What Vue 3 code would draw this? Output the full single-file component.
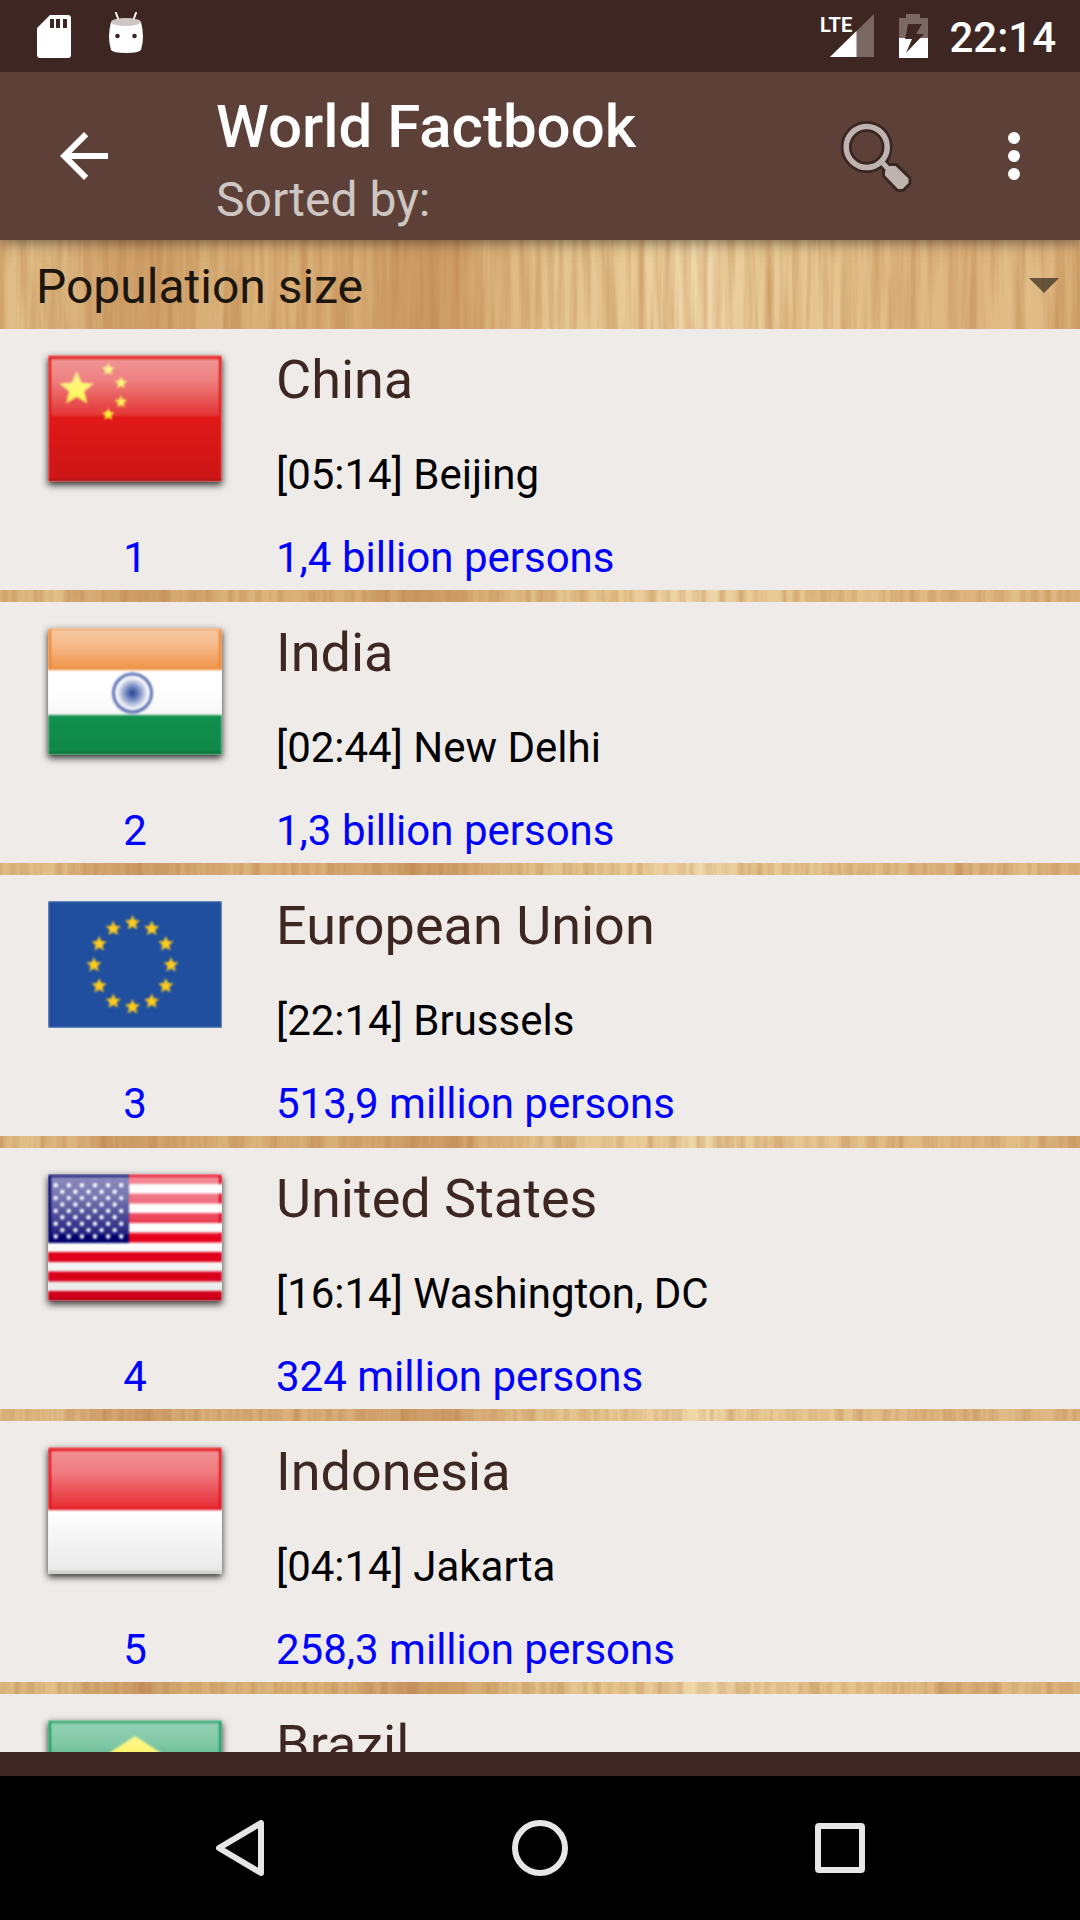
<script setup>
import { ref } from 'vue'

const sortKey = ref('population')

const countries = [
  { code: 'cn', name: 'China', capital: '[05:14] Beijing', rank: 1, value: '1,4 billion persons' },
  { code: 'in', name: 'India', capital: '[02:44] New Delhi', rank: 2, value: '1,3 billion persons' },
  { code: 'eu', name: 'European Union', capital: '[22:14] Brussels', rank: 3, value: '513,9 million persons' },
  { code: 'us', name: 'United States', capital: '[16:14] Washington, DC', rank: 4, value: '324 million persons' },
  { code: 'id', name: 'Indonesia', capital: '[04:14] Jakarta', rank: 5, value: '258,3 million persons' },
  { code: 'br', name: 'Brazil' },
]

// Five-pointed star as a polygon points list
function star(cx, cy, r) {
  const pts = []
  for (let i = 0; i < 10; i++) {
    const radius = i % 2 ? r * 0.45 : r
    const a = (Math.PI / 5) * i - Math.PI / 2
    pts.push(`${(cx + radius * Math.cos(a)).toFixed(1)},${(cy + radius * Math.sin(a)).toFixed(1)}`)
  }
  return pts.join(' ')
}

const chinaStars = [
  star(28.7, 34, 18), star(60.3, 14.5, 6.5), star(73, 28, 6.5), star(73, 47, 6.5), star(60.3, 59.5, 6.5),
]

const euStars = Array.from({ length: 12 }, (_, i) => {
  const a = (Math.PI / 6) * i
  return star(84.5 + 38.5 * Math.sin(a), 64 - 42 * Math.cos(a), 8)
})

const usStars = []
for (let row = 0; row < 9; row++) {
  const count = row % 2 ? 5 : 6
  for (let col = 0; col < count; col++) {
    usStars.push({ x: 7.7 + col * 13.1 + (row % 2 ? 6.6 : 0), y: 11.3 + row * 6.4 })
  }
}
</script>

<template>
  <div class="screen">
    <svg class="defs" aria-hidden="true">
      <defs>
        <linearGradient id="gloss" x1="0" y1="0" x2="0" y2="1">
          <stop offset="0" stop-color="#fff" stop-opacity=".54" />
          <stop offset=".35" stop-color="#fff" stop-opacity=".46" />
          <stop offset="1" stop-color="#fff" stop-opacity=".12" />
        </linearGradient>
        <linearGradient id="shade" x1="0" y1="0" x2="0" y2="1">
          <stop offset="0" stop-color="#000" stop-opacity="0" />
          <stop offset="1" stop-color="#000" stop-opacity=".09" />
        </linearGradient>
        <radialGradient id="chakra">
          <stop offset="0" stop-color="#1f3f96" />
          <stop offset=".45" stop-color="#7d90c6" />
          <stop offset="1" stop-color="#fff" />
        </radialGradient>
      </defs>
    </svg>

    <div class="status">
      <svg width="34" height="43" viewBox="0 0 34 43" fill="#fff">
        <path fill-rule="evenodd" d="M13 0H31Q34 0 34 3V40Q34 43 31 43H3Q0 43 0 40V13ZM13 4V13H17V4ZM19 4V13H23V4ZM26 4V13H30V4Z" />
      </svg>
      <svg class="bot" width="34" height="42" viewBox="0 0 34 42">
        <path d="M7 1L10 9M27 1L24 9" stroke="#fff" stroke-width="2" stroke-linecap="round" />
        <path d="M2 10Q17 16 32 10Q36 25 32 38Q30 41 17 41Q4 41 2 38Q-2 25 2 10Z" fill="#fff" />
        <ellipse cx="17" cy="10" rx="15" ry="4" fill="#cfc6c4" />
        <circle cx="8.500" cy="24" r="2.300" fill="#3e2723" />
        <circle cx="25.500" cy="24" r="2.300" fill="#3e2723" />
      </svg>
      <span class="spacer"></span>
      <svg width="54" height="44" viewBox="0 0 54 44">
        <path d="M54 0V43H10Z" fill="#7b6865" />
        <path d="M36.500 17V43H10Z" fill="#fff" />
        <text class="lte" x="0" y="18">LTE</text>
      </svg>
      <svg class="battery" width="29" height="44" viewBox="0 0 29 44">
        <path d="M7 0H21V4H29V24H0V4H7Z" fill="#7b6865" />
        <path d="M0 24H29V44H0Z" fill="#fff" />
        <path d="M9 10H23L17 20H25L7 39L13 25H6Z" fill="#3e2723" />
      </svg>
      <span class="clock">22:14</span>
    </div>

    <header class="bar">
      <button class="icon" aria-label="Back">
        <svg width="72" height="72" viewBox="0 0 24 24" fill="#fff">
          <path d="M20 11H7.830l5.590-5.590L12 4l-8 8 8 8 1.410-1.410L7.830 13H20v-2z" />
        </svg>
      </button>
      <div class="titles">
        <h1>World Factbook</h1>
        <label for="sort">Sorted by:</label>
      </div>
      <button class="icon" aria-label="Search">
        <svg width="72" height="72" viewBox="0 0 72 72" stroke-linejoin="round">
          <g fill="none" stroke="#3a2722">
            <circle cx="26.700" cy="27" r="20.500" stroke-width="11" />
            <path d="M42 42L50 51" stroke-width="10" />
            <path d="M45 51L50 46H55.500L68.500 58.500V63L62.500 69H58L45 55.500Z" stroke-width="6" />
          </g>
          <circle cx="26.700" cy="27" r="20.500" stroke-width="5.500" fill="none" stroke="#bfb3b0" />
          <path d="M41 41L50 51" stroke-width="5" stroke="#bfb3b0" />
          <path d="M45 51L50 46H55.500L68.500 58.500V63L62.500 69H58L45 55.500Z" fill="#bfb3b0" />
        </svg>
      </button>
      <button class="icon more" aria-label="More options">
        <svg width="72" height="72" viewBox="0 0 72 72" fill="#fff">
          <circle cx="36" cy="18" r="6" /><circle cx="36" cy="36" r="6" /><circle cx="36" cy="54" r="6" />
        </svg>
      </button>
    </header>

    <main class="content">
      <svg class="wood" viewBox="0 0 1080 1512" preserveAspectRatio="none" aria-hidden="true">
        <defs>
          <linearGradient id="planks">
            <stop offset="0" stop-color="#e0bb85" />
            <stop offset=".05" stop-color="#e2c08a" />
            <stop offset=".08" stop-color="#d7ac77" />
            <stop offset=".13" stop-color="#cf9f69" />
            <stop offset=".19" stop-color="#d9b079" />
            <stop offset=".25" stop-color="#dcb37c" />
            <stop offset=".33" stop-color="#d8ad77" />
            <stop offset=".38" stop-color="#cf9f69" />
            <stop offset=".42" stop-color="#cf9f69" />
            <stop offset=".45" stop-color="#dcb47e" />
            <stop offset=".52" stop-color="#e4c591" />
            <stop offset=".58" stop-color="#e8ca95" />
            <stop offset=".65" stop-color="#f0d9ab" />
            <stop offset=".69" stop-color="#e9cc98" />
            <stop offset=".77" stop-color="#e6c692" />
            <stop offset=".84" stop-color="#e1bb86" />
            <stop offset=".9" stop-color="#ddb47f" />
            <stop offset=".94" stop-color="#e2be89" />
            <stop offset="1" stop-color="#dcb27d" />
          </linearGradient>
          <filter id="grain" x="0" y="0" width="100%" height="100%" color-interpolation-filters="sRGB">
            <feTurbulence type="fractalNoise" baseFrequency="0.11 0.005" numOctaves="3" seed="11" />
            <feColorMatrix values="0 0 0 0 .7  0 0 0 0 .46  0 0 0 0 .24  0.9 0 0 0 -.32" />
          </filter>
        </defs>
        <rect width="1080" height="1512" fill="url(#planks)" />
        <rect width="1080" height="1512" filter="url(#grain)" />
      </svg>

      <div class="sort">
        <select id="sort" v-model="sortKey">
          <option value="population">Population size</option>
        </select>
        <svg class="caret" width="30" height="15" viewBox="0 0 30 15"><path d="M0 0H30L15 15Z" fill="#000" fill-opacity=".54" /></svg>
      </div>

      <ul class="list">
        <li v-for="c in countries" :key="c.code" class="row">
          <div class="side">
            <svg class="flag" :class="{ flat: c.code === 'eu' }" width="174" height="127" viewBox="0 0 174 127" role="img" :aria-label="c.name">
              <g class="art">
                <template v-if="c.code === 'cn'">
                  <rect width="174" height="127" fill="#e01818" />
                  <polygon v-for="p in chinaStars" :key="p" :points="p" fill="#fff01c" />
                  <rect x="3" y="4" width="168" height="57" fill="url(#gloss)" />
                </template>
                <template v-else-if="c.code === 'in'">
                  <rect width="174" height="127" fill="#fff" />
                  <rect width="174" height="42" fill="#ee842f" />
                  <rect y="87" width="174" height="40" fill="#12954f" />
                  <circle cx="84.500" cy="65" r="16" fill="url(#chakra)" />
                  <circle cx="84.500" cy="65" r="19" fill="none" stroke="#5a72b4" stroke-width="3" />
                  <rect x="3" y="2" width="168" height="39" fill="url(#gloss)" />
                </template>
                <template v-else-if="c.code === 'eu'">
                  <rect width="174" height="127" fill="#1f4f9e" />
                  <polygon v-for="p in euStars" :key="p" :points="p" fill="#ffcc1c" />
                </template>
                <template v-else-if="c.code === 'us'">
                  <rect width="174" height="127" fill="#fff" />
                  <rect v-for="n in 7" :key="n" :y="(n - 1) * 19.5" width="174" height="10" fill="#e6001c" />
                  <rect width="81" height="69" fill="#00006c" />
                  <circle v-for="(s, i) in usStars" :key="i" :cx="s.x" :cy="s.y" r="2.200" fill="#fff" />
                  <rect x="3" y="3" width="168" height="58" fill="url(#gloss)" />
                </template>
                <template v-else-if="c.code === 'id'">
                  <rect width="174" height="127" fill="#fff" />
                  <rect width="174" height="63" fill="#e31019" />
                  <rect x="3" y="4" width="168" height="57" fill="url(#gloss)" />
                </template>
                <template v-else>
                  <rect width="174" height="127" fill="#179a5c" />
                  <path d="M87 16L160 64L87 112L14 64Z" fill="#ffef18" />
                  <circle cx="87" cy="64" r="28" fill="#21409a" />
                  <rect x="3" y="3" width="168" height="58" fill="url(#gloss)" />
                </template>
                <template v-if="c.code !== 'eu'">
                  <rect y="63" width="174" height="64" fill="url(#shade)" />
                  <rect y="124" width="174" height="3" fill="#000" fill-opacity=".14" />
                  <rect width="174" height="2" fill="#fff" fill-opacity=".3" />
                </template>
              </g>
            </svg>
            <span v-if="c.rank" class="fact">{{ c.rank }}</span>
          </div>
          <div class="info">
            <h2>{{ c.name }}</h2>
            <p v-if="c.capital" class="capital">{{ c.capital }}</p>
            <p v-if="c.value" class="fact">{{ c.value }}</p>
          </div>
        </li>
      </ul>
    </main>

    <div class="strip"></div>

    <nav class="nav">
      <button aria-label="System back">
        <svg width="56" height="56" viewBox="0 0 56 56"><path d="M49 3V53L7 28Z" /></svg>
      </button>
      <button aria-label="Home">
        <svg width="56" height="56" viewBox="0 0 56 56"><circle cx="28" cy="28" r="25" /></svg>
      </button>
      <button aria-label="Recent apps">
        <svg width="56" height="56" viewBox="0 0 56 56"><rect x="6" y="6" width="44" height="44" rx="1" /></svg>
      </button>
    </nav>
  </div>
</template>

<style>
body {
  margin: 0;
  background: #000;
}
</style>

<style scoped>
.screen {
  display: flex;
  flex-direction: column;
  height: 100vh;
  font-family: Roboto, "Noto Sans", sans-serif;
  color: #000;
}
.defs {
  position: absolute;
  width: 0;
  height: 0;
}
svg {
  display: block;
  flex: none;
}
button {
  border: 0;
  padding: 0;
  background: none;
}
h1, h2, p, ul {
  margin: 0;
  padding: 0;
  font-weight: 400;
}
.status {
  position: relative;
  z-index: 2;
  display: flex;
  align-items: center;
  height: 72px;
  flex: none;
  box-sizing: border-box;
  padding: 0 24px 0 37px;
  background: #3e2723;
}
.bot {
  margin: 0 0 6px 38px;
}
.spacer {
  flex: 1;
}
.battery {
  margin: 0 21px 0 25px;
}
.lte {
  font: 700 20px "Liberation Sans Narrow", Roboto, sans-serif;
  fill: #fff;
}
.clock {
  padding-top: 3px;
  font-size: 42px;
  font-weight: 500;
  line-height: 50px;
  color: #fff;
}
.bar {
  position: relative;
  z-index: 1;
  display: flex;
  align-items: center;
  height: 168px;
  flex: none;
  box-sizing: border-box;
  padding: 0 30px 0 48px;
  background: #5d4037;
  box-shadow: 0 2px 14px rgba(0, 0, 0, 0.5);
}
.more {
  margin-left: 66px;
}
.titles {
  display: flex;
  flex-direction: column;
  gap: 10px;
  flex: 1;
  min-width: 0;
  padding: 8px 0 0 96px;
}
.titles h1 {
  font-size: 60px;
  font-weight: 500;
  line-height: 70px;
  color: #fff;
}
.titles label {
  font-size: 48px;
  line-height: 56px;
  color: #cec6c3;
}
.content {
  position: relative;
  flex: 1;
  min-height: 0;
  overflow: hidden;
}
.wood {
  position: absolute;
  inset: 0;
  width: 100%;
  height: 100%;
}
.sort {
  position: relative;
  display: flex;
  align-items: center;
  height: 89px;
}
.sort select {
  appearance: none;
  width: 100%;
  height: 89px;
  box-sizing: border-box;
  border: 0;
  margin: 0;
  padding: 4px 80px 0 36px;
  background: transparent;
  font: 400 48px Roboto, "Noto Sans", sans-serif;
  color: #1b1610;
}
.caret {
  position: absolute;
  right: 21px;
  top: 38px;
  pointer-events: none;
}
.list {
  position: relative;
  display: flex;
  flex-direction: column;
  gap: 12px;
  list-style: none;
}
.row {
  display: flex;
  gap: 6px;
  height: 261px;
  background: #eeebe8;
}
.side {
  display: flex;
  flex-direction: column;
  justify-content: space-between;
  align-items: center;
  width: 270px;
  box-sizing: border-box;
  padding: 26px 0 7px;
}
.flag {
  box-shadow: 0 3px 7px rgba(0, 0, 0, 0.8);
}
.flag.flat {
  box-shadow: none;
}
.art {
  filter: blur(1px);
}
.info {
  flex: 1;
  min-width: 0;
  padding-top: 15px;
}
.info h2 {
  font-size: 54px;
  line-height: 72px;
  color: #3e2723;
}
.capital {
  margin: 34px 0 33px;
  font-size: 42px;
  line-height: 50px;
}
.fact {
  font-size: 42px;
  line-height: 50px;
  color: #00f;
}
.strip {
  height: 24px;
  flex: none;
  background: #3e2723;
}
.nav {
  display: flex;
  height: 144px;
  flex: none;
  box-sizing: border-box;
  padding: 0 90px;
  background: #000;
}
.nav button {
  display: flex;
  flex: 1;
  align-items: center;
  justify-content: center;
}
.nav svg {
  fill: none;
  stroke: #e6e6e6;
  stroke-width: 6;
  stroke-linejoin: round;
}
</style>
